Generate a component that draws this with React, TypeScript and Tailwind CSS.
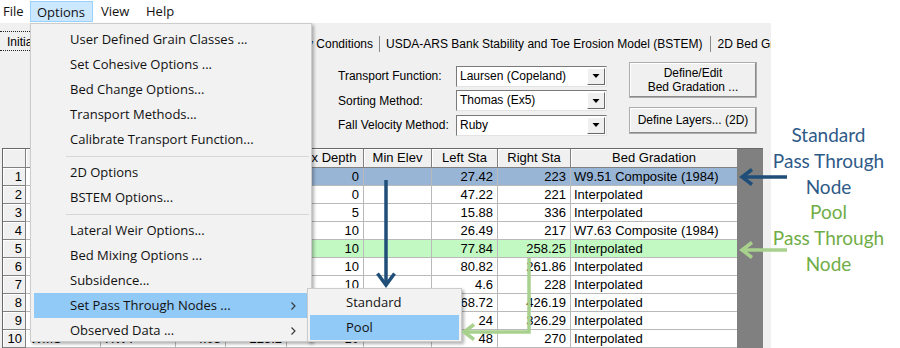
import React from "react";

type Row = {
  n: number;
  river: string;
  reach: string;
  rs: string;
  inv: string;
  depth: string;
  left: string;
  right: string;
  bed: string;
  hl?: "blue" | "green";
};

// hidden columns only matter for the last row, which peeks out under the menu
const rows: Row[] = [
  { n: 1, river: "", reach: "", rs: "", inv: "", depth: "0", left: "27.42", right: "223", bed: "W9.51 Composite (1984)", hl: "blue" },
  { n: 2, river: "", reach: "", rs: "", inv: "", depth: "0", left: "47.22", right: "221", bed: "Interpolated" },
  { n: 3, river: "", reach: "", rs: "", inv: "", depth: "5", left: "15.88", right: "336", bed: "Interpolated" },
  { n: 4, river: "", reach: "", rs: "", inv: "", depth: "10", left: "26.49", right: "217", bed: "W7.63 Composite (1984)" },
  { n: 5, river: "", reach: "", rs: "", inv: "", depth: "10", left: "77.84", right: "258.25", bed: "Interpolated", hl: "green" },
  { n: 6, river: "", reach: "", rs: "", inv: "", depth: "10", left: "80.82", right: "261.86", bed: "Interpolated" },
  { n: 7, river: "", reach: "", rs: "", inv: "", depth: "10", left: "4.6", right: "228", bed: "Interpolated" },
  { n: 8, river: "", reach: "", rs: "", inv: "", depth: "10", left: "68.72", right: "426.19", bed: "Interpolated" },
  { n: 9, river: "", reach: "", rs: "", inv: "", depth: "10", left: "24", right: "326.29", bed: "Interpolated" },
  { n: 10, river: "WMS", reach: "HWY", rs: "4.08", inv: "225.2", depth: "10", left: "48", right: "270", bed: "Interpolated" },
];

const gridCols = "grid grid-cols-[23px_75px_75px_50px_61px_77px_68px_66px_73px_167px]";

function Combo({ value }: { value: string }) {
  return (
    <div className="w-[151px] h-[21px] flex bg-white border border-t-[#7a7a7a] border-l-[#7a7a7a] border-b-[#e3e3e3] border-r-[#e3e3e3]">
      <div className="flex-1 pl-[3px] leading-[19px] text-black">{value}</div>
      <div className="w-[18px] m-[1px] bg-[#f0f0f0] border border-t-white border-l-white border-b-[#696969] border-r-[#696969] flex items-center justify-center">
        <svg width="8" height="6" viewBox="0 0 8 6">
          <path d="M0.5 1 L7.5 1 L4 5 Z" fill="#000" />
        </svg>
      </div>
    </div>
  );
}

function MenuItem({ label, active, sub }: { label: string; active?: boolean; sub?: boolean }) {
  return (
    <div className={"h-[25px] mx-[3px] flex items-center pl-[36px] pr-[12px] " + (active ? "bg-[#91c9f7]" : "")}>
      <span className="flex-1">{label}</span>
      {sub && (
        <svg width="5" height="8" viewBox="0 0 5 8">
          <path d="M0.5 0.5 L4 4 L0.5 7.5" fill="none" stroke="#333" strokeWidth="1.1" />
        </svg>
      )}
    </div>
  );
}

function Sep() {
  return (
    <div className="h-[8px] flex items-center ml-[35px] mr-[2px]">
      <div className="h-px w-full bg-[#d7d7d7]" />
    </div>
  );
}

export default function App() {
  return (
    <div className="w-[900px] h-[348px] relative overflow-hidden bg-white flex font-['Liberation_Sans',Arial,sans-serif] text-[12px] text-black">
      {/* application window */}
      <div className="w-[771px] h-full flex flex-col bg-[#f0f0f0] overflow-hidden">
        {/* menu bar */}
        <div className="h-[23px] bg-white flex items-center font-['Open_Sans','Noto_Sans',sans-serif] text-[13px] text-[#111]">
          <span className="w-[30px] pl-[3px]">File</span>
          <span className="w-[63px] h-[21px] pl-[6px] leading-[20px] bg-[#cce8ff] border border-[#99d1ff]">Options</span>
          <span className="w-[53px] pl-[8px]">View</span>
          <span>Help</span>
        </div>

        {/* tabs */}
        <div className="h-[31px] flex items-start pt-[12px] whitespace-nowrap">
          <span className="shrink-0 -mt-[4px] w-[250px] h-[20px] pl-[7px] pt-[2px] leading-[16px] overflow-hidden border-y border-dotted border-[#222]">
            Initial Conditions and Transport Parameters
          </span>
          <span className="shrink-0 w-[123px] text-right leading-[18px]">Boundary Conditions</span>
          <div className="shrink-0 mx-[6px] mt-[1px] h-[16px] w-px bg-[#8a8a8a]" />
          <span className="shrink-0 leading-[18px]">USDA-ARS Bank Stability and Toe Erosion Model (BSTEM)</span>
          <div className="shrink-0 mx-[7px] mt-[1px] h-[16px] w-px bg-[#8a8a8a]" />
          <span className="shrink-0 leading-[18px]">2D Bed Gradation</span>
        </div>

        {/* controls */}
        <div className="h-[95px] flex items-start pl-[338px]">
          <div className="pt-[12px] flex flex-col gap-[3.5px]">
            {[
              ["Transport Function:", "Laursen (Copeland)"],
              ["Sorting Method:", "Thomas (Ex5)"],
              ["Fall Velocity Method:", "Ruby"],
            ].map(([l, v]) => (
              <div key={l} className="flex items-center">
                <span className="w-[118px]">{l}</span>
                <Combo value={v} />
              </div>
            ))}
          </div>
          <div className="ml-[22px] pt-[8px] flex flex-col gap-[9px]">
            <div className="w-[128px] h-[36px] flex flex-col items-center justify-center leading-[14px] bg-[#f0f0f0] border border-[#adadad] shadow-[inset_-1px_-1px_0_#8a8a8a,inset_1px_1px_0_#ffffff]">
              <span>Define/Edit</span>
              <span>Bed Gradation ...</span>
            </div>
            <div className="w-[128px] h-[27px] flex items-center justify-center bg-[#f0f0f0] border border-[#adadad] shadow-[inset_-1px_-1px_0_#8a8a8a,inset_1px_1px_0_#ffffff]">
              Define Layers... (2D)
            </div>
          </div>
        </div>

        {/* table */}
        <div className="flex-1 flex pl-[2px] text-[13px]">
          <div className="w-[735px] border-t border-l border-[#696969] bg-white">
            <div className={gridCols + " h-[19px] bg-[#f0f0f0]"}>
              {["", "", "", "", "", "Max Depth", "Min Elev", "Left Sta", "Right Sta", "Bed Gradation"].map((h, i) => (
                <div key={i} className="flex items-center justify-center whitespace-nowrap overflow-hidden border-r border-b border-[#808080] shadow-[inset_1px_1px_0_#ffffff]">
                  {h}
                </div>
              ))}
            </div>
            {rows.map((r) => {
              const bg = r.hl === "blue" ? "bg-[#98b5d6]" : r.hl === "green" ? "bg-[#c2f8c2]" : "bg-white";
              const c = "h-[18px] leading-[17px] px-[4px] whitespace-nowrap overflow-hidden border-r border-b border-[#b9b9b9] ";
              return (
                <div key={r.n} className={gridCols}>
                  <div className="h-[18px] leading-[17px] pr-[3px] text-right bg-[#f0f0f0] border-r border-b border-[#808080] shadow-[inset_1px_1px_0_#ffffff]">
                    {r.n}
                  </div>
                  <div className={c + "bg-white"}>{r.river}</div>
                  <div className={c + bg}>{r.reach}</div>
                  <div className={c + bg + " text-right"}>{r.rs}</div>
                  <div className={c + bg + " text-right"}>{r.inv}</div>
                  <div className={c + bg + " text-right"}>{r.depth}</div>
                  <div className={c + bg}></div>
                  <div className={c + bg + " text-right"}>{r.left}</div>
                  <div className={c + bg + " text-right"}>{r.right}</div>
                  <div className={c + bg + " !pl-[3px]"}>{r.bed}</div>
                </div>
              );
            })}
          </div>
          <div className="w-[26px] bg-[#808080] border-t border-[#696969]" />
        </div>
      </div>

      {/* annotation column */}
      <div className="flex-1 flex flex-col items-center pr-[14px] pt-[122px] font-['Lato','Open_Sans',sans-serif] text-[19px] leading-[25.8px]">
        <span className="text-[#2e5a88]">Standard</span>
        <span className="text-[#2e5a88]">Pass Through</span>
        <span className="text-[#2e5a88]">Node</span>
        <span className="text-[#70ad47]">Pool</span>
        <span className="text-[#70ad47]">Pass Through</span>
        <span className="text-[#70ad47]">Node</span>
      </div>

      {/* Options dropdown menu */}
      <div className="absolute left-[30px] top-[23px] w-[282px] h-[319px] bg-[#f2f2f2] border border-[#cccccc] shadow-[2px_2px_3px_rgba(0,0,0,0.3)] pt-[3px] font-['Open_Sans','Noto_Sans',sans-serif] text-[13px] text-[#111]">
        <MenuItem label="User Defined Grain Classes ..." />
        <MenuItem label="Set Cohesive Options ..." />
        <MenuItem label="Bed Change Options..." />
        <MenuItem label="Transport Methods..." />
        <MenuItem label="Calibrate Transport Function..." />
        <Sep />
        <MenuItem label="2D Options" />
        <MenuItem label="BSTEM Options..." />
        <Sep />
        <MenuItem label="Lateral Weir Options..." />
        <MenuItem label="Bed Mixing Options ..." />
        <MenuItem label="Subsidence..." />
        <MenuItem label="Set Pass Through Nodes ..." active sub />
        <MenuItem label="Observed Data ..." sub />
      </div>

      {/* submenu */}
      <div className="absolute left-[307px] top-[288px] w-[155px] h-[54px] bg-[#f2f2f2] border border-[#cccccc] shadow-[2px_2px_3px_rgba(0,0,0,0.3)] pt-[1px] font-['Open_Sans','Noto_Sans',sans-serif] text-[13px] text-[#111]">
        <div className="h-[25px] mx-[2px] flex items-center pl-[36px]">Standard</div>
        <div className="h-[25px] mx-[2px] flex items-center pl-[36px] bg-[#91c9f7]">Pool</div>
      </div>

      {/* callout arrows */}
      <svg className="absolute left-0 top-0 pointer-events-none" width="900" height="348" viewBox="0 0 900 348">
        <g fill="none" strokeWidth="3.5" strokeLinecap="butt" strokeLinejoin="miter">
          <path d="M386 180 L386 285" stroke="#1f4e79" />
          <path d="M377.5 273.5 L386 285 L394.5 273.5" stroke="#1f4e79" />
          <path d="M787 177 L743 177" stroke="#1f4e79" />
          <path d="M752 169.5 L742 177 L752 184.5" stroke="#1f4e79" />
          <path d="M787 250 L743 250" stroke="#a9d18e" />
          <path d="M752 242.5 L742 250 L752 257.5" stroke="#a9d18e" />
          <path d="M529 258 L529 332 L465 332" stroke="#a9d18e" />
          <path d="M474 324.5 L464 332 L474 339.5" stroke="#a9d18e" />
        </g>
      </svg>
    </div>
  );
}
